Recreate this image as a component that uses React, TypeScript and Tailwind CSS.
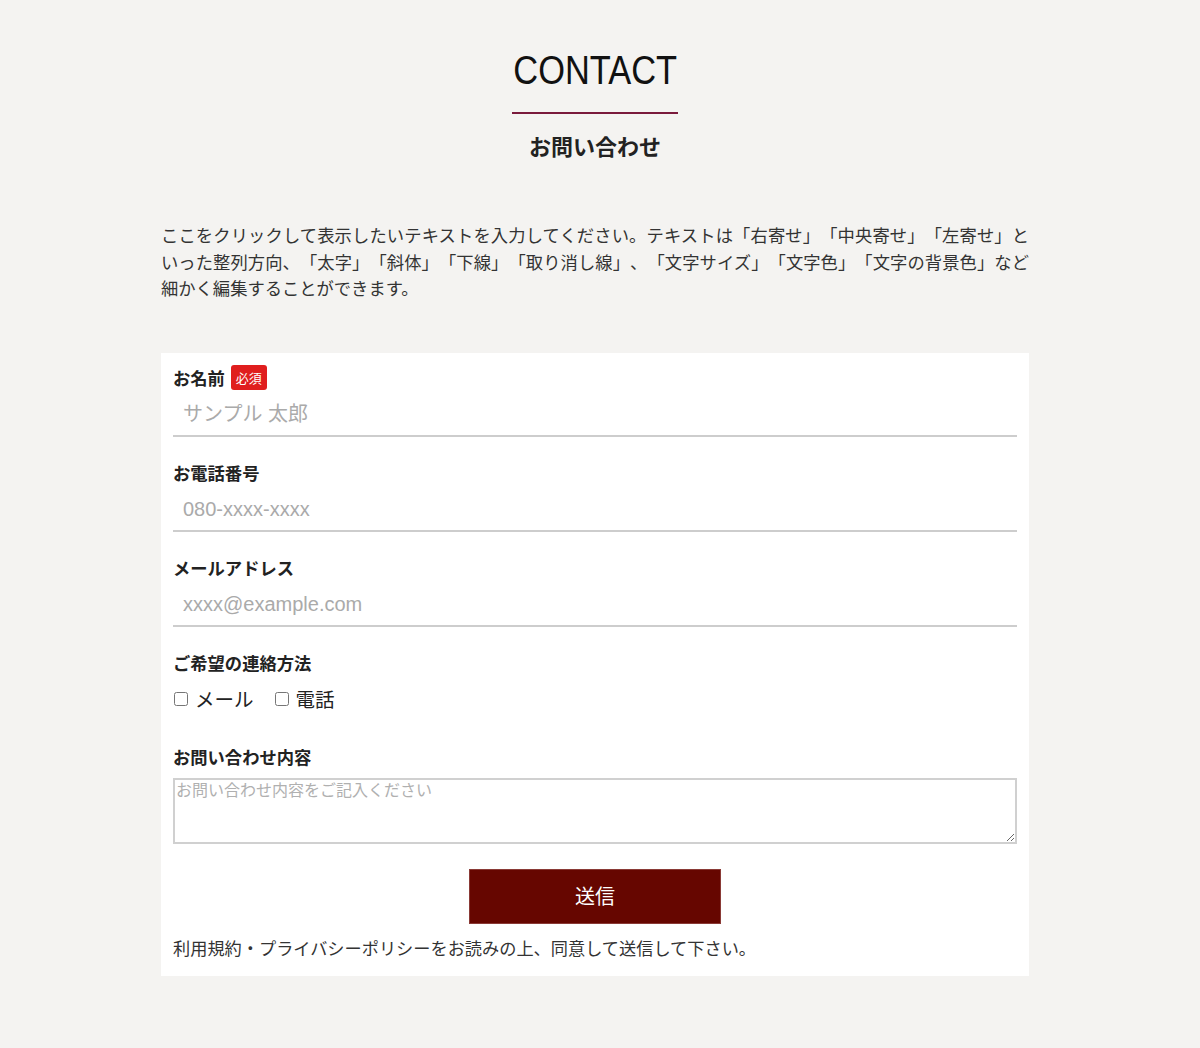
export default function App() {
  return (
    <div className="min-h-[1048px] bg-[#f4f3f1] pr-[10px] font-['Liberation_Sans','Noto_Sans_CJK_JP',sans-serif] text-[#333] [text-spacing-trim:space-all]">
      <div className="mx-auto w-[868px] pt-[44px]">
        <div className="flex flex-col items-center">
          <h2 className="inline-block origin-center scale-x-[0.86] font-['Liberation_Sans',sans-serif] text-[40px] leading-[52px] text-[#111]">
            CONTACT
          </h2>
          <div className="mt-[16px] h-[2px] w-[166px] bg-[#7a1a3c]" />
          <p className="mt-[16px] font-['Noto_Sans_CJK_JP',sans-serif] text-[22px] font-bold leading-[30px] text-[#222]">
            お問い合わせ
          </p>
        </div>

        <p className="mt-[62px] text-justify font-['Noto_Sans_CJK_JP',sans-serif] text-[17.3px] leading-[26.5px] text-[#333]">
          ここをクリックして表示したいテキストを入力してください。テキストは「右寄せ」「中央寄せ」「左寄せ」といった整列方向、「太字」「斜体」「下線」「取り消し線」、「文字サイズ」「文字色」「文字の背景色」など細かく編集することができます。
        </p>

        <form className="mt-[51px] bg-white px-[12px] pb-[15px] pt-[12px] font-['Noto_Sans_CJK_JP',sans-serif]">
          <Field label="お名前" required placeholder="サンプル 太郎" />
          <Field label="お電話番号" placeholder="080-xxxx-xxxx" />
          <Field label="メールアドレス" placeholder="xxxx@example.com" />

          <div>
            <Label text="ご希望の連絡方法" />
            <div className="mt-[9px] flex items-center text-[19.5px] leading-[28px] text-[#222]">
              <label className="flex items-center">
                <input type="checkbox" className="ml-[1px] mr-[7px] h-[14px] w-[14px]" />
                メール
              </label>
              <label className="ml-[21px] flex items-center">
                <input type="checkbox" className="mr-[7px] h-[14px] w-[14px]" />
                電話
              </label>
            </div>
          </div>

          <div className="mt-[31px]">
            <Label text="お問い合わせ内容" />
            <textarea
              placeholder="お問い合わせ内容をご記入ください"
              className="mt-[8px] block h-[66px] w-full resize-y border-2 border-[#d0d0d0] px-[1px] py-0 font-['Noto_Sans_CJK_JP',sans-serif] text-[16px] leading-[18px] outline-none placeholder:text-[#b0b0b0]"
            />
          </div>

          <div className="mt-[25px] flex justify-center">
            <button
              type="button"
              className="h-[55px] w-[252px] border border-[#8a3a36] bg-[#660600] text-[20px] text-white"
            >
              送信
            </button>
          </div>

          <p className="mt-[11px] text-[17.2px] leading-[26px] text-[#333]">
            利用規約・プライバシーポリシーをお読みの上、同意して送信して下さい。
          </p>
        </form>
      </div>
    </div>
  );
}

function Label({ text, required }: { text: string; required?: boolean }) {
  return (
    <div className="flex items-center gap-[6px]">
      <span className="text-[17.3px] font-bold leading-[26px] text-[#222]">{text}</span>
      {required && (
        <span className="rounded-[3px] bg-[#e01e1e] px-[5px] text-[13px] leading-[25px] text-white">
          必須
        </span>
      )}
    </div>
  );
}

function Field({
  label,
  placeholder,
  required,
}: {
  label: string;
  placeholder: string;
  required?: boolean;
}) {
  return (
    <div className="pb-[23px]">
      <Label text={label} required={required} />
      <input
        type="text"
        placeholder={placeholder}
        className="block h-[46px] w-full border-b-2 border-[#cdcdcd] px-[10px] pt-[4px] font-['Liberation_Sans','Noto_Sans_CJK_JP',sans-serif] text-[20px] outline-none placeholder:text-[#aaa]"
      />
    </div>
  );
}
